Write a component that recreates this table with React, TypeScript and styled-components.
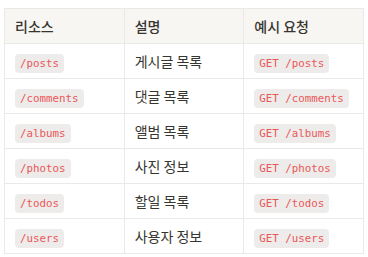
import React from 'react'
import styled, { createGlobalStyle } from 'styled-components'

const GlobalStyle = createGlobalStyle`
  body {
    margin: 0;
    background: #ffffff;
    font-family: "Noto Sans CJK KR", "Noto Sans", sans-serif;
    color: #37352f;
  }
`

interface Resource {
  path: string
  description: string
}

const resources: Resource[] = [
  { path: '/posts', description: '게시글 목록' },
  { path: '/comments', description: '댓글 목록' },
  { path: '/albums', description: '앨범 목록' },
  { path: '/photos', description: '사진 정보' },
  { path: '/todos', description: '할일 목록' },
  { path: '/users', description: '사용자 정보' },
]

const App: React.FC = () => {
  return (
    <>
      <GlobalStyle />
      <StyledWrapper>
        <StyledTable>
          <thead>
            <tr>
              <StyledHeadCell>리소스</StyledHeadCell>
              <StyledHeadCell>설명</StyledHeadCell>
              <StyledHeadCell>예시 요청</StyledHeadCell>
            </tr>
          </thead>
          <tbody>
            {resources.map(({ path, description }) => (
              <tr key={path}>
                <StyledCell>
                  <StyledCode>{path}</StyledCode>
                </StyledCell>
                <StyledCell>{description}</StyledCell>
                <StyledCell>
                  <StyledCode>GET {path}</StyledCode>
                </StyledCell>
              </tr>
            ))}
          </tbody>
        </StyledTable>
      </StyledWrapper>
    </>
  )
}

const StyledWrapper = styled.div`
  padding: 8px 4px 0;
`

const StyledTable = styled.table`
  width: 360px;
  border-collapse: collapse;
  table-layout: fixed;
  font-size: 14px;
`

const StyledHeadCell = styled.th`
  height: 34px;
  padding: 0 10px;
  border: 1px solid #e9e9e7;
  background: #f7f6f3;
  font-weight: 500;
  text-align: left;
  vertical-align: middle;
`

const StyledCell = styled.td`
  height: 34px;
  padding: 0 10px;
  border: 1px solid #e9e9e7;
  vertical-align: middle;
  white-space: nowrap;
`

const StyledCode = styled.code`
  display: inline-block;
  padding: 2px 5px;
  border-radius: 4px;
  background: #edeceb;
  color: #eb5757;
  font-family: "DejaVu Sans Mono", "Liberation Mono", monospace;
  font-size: 10.8px;
  line-height: 15px;
  position: relative;
  top: 1px;
`

export default App
